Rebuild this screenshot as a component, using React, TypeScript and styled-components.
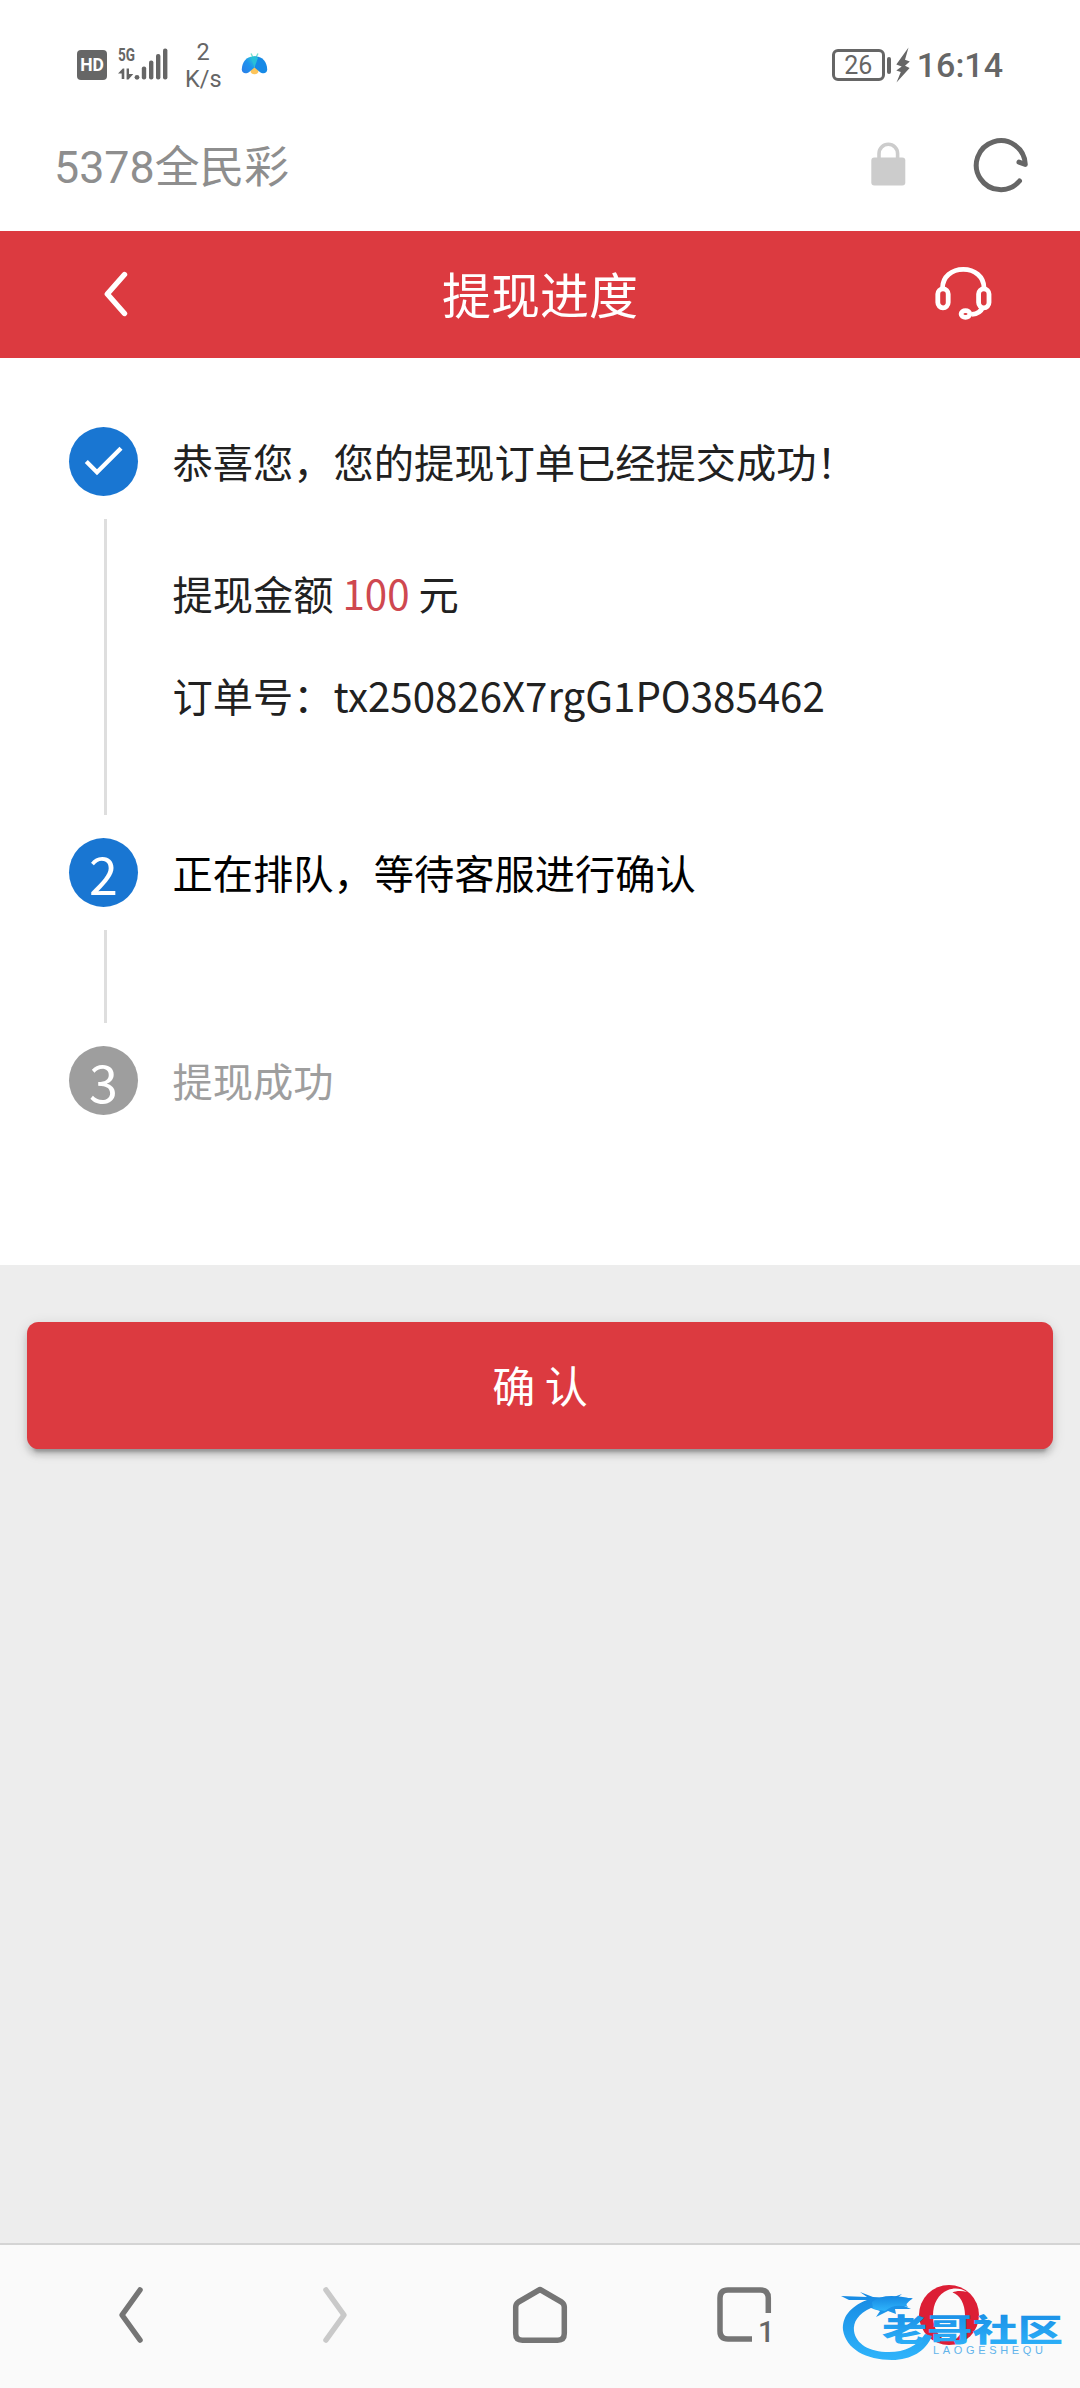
import React from "react";
import styled, { createGlobalStyle } from "styled-components";

const GlobalStyle = createGlobalStyle`
  * { box-sizing: border-box; }
  body { margin: 0; background: #ededed; }
`;

const cjk = `"Noto Sans CJK SC", "Noto Sans", sans-serif`;
const roboto = `Roboto, "Noto Sans CJK SC", sans-serif`;

const Page = styled.div`
  display: flex;
  flex-direction: column;
  width: 1080px;
  height: 2388px;
  overflow: hidden;
  background: #ededed;
  font-family: ${cjk};
`;

const StatusBar = styled.div`
  display: flex;
  align-items: center;
  justify-content: space-between;
  height: 130px;
  padding: 0 77px 0 77px;
  background: #fff;
  color: #666;
  font-family: ${roboto};
`;

const StatusGroup = styled.div`
  display: flex;
  align-items: center;
`;

const HdBadge = styled.span`
  width: 30px;
  height: 30px;
  margin-right: 11px;
  border-radius: 4px;
  background: #666;
  color: #fff;
  font: 700 17.5px/31px Roboto, sans-serif;
  text-align: center;
`;

const Speed = styled.div`
  width: 36px;
  margin: 0 20px 0 16px;
  padding-top: 2px;
  font-size: 23.5px;
  line-height: 27px;
  text-align: center;
`;

const Battery = styled.span`
  width: 53px;
  height: 32px;
  border: 3px solid #666;
  border-radius: 6px;
  font-size: 25px;
  line-height: 27px;
  text-align: center;
`;

const BatteryNub = styled.span`
  width: 4px;
  height: 17px;
  margin: 0 5px 0 2px;
  border-radius: 2px;
  background: #666;
`;

const Clock = styled.span`
  margin-left: 7px;
  font-size: 34px;
  font-weight: 500;
  line-height: 40px;
`;

const AddressBar = styled.div`
  display: flex;
  align-items: center;
  height: 101px;
  padding: 0 51px 31px 54px;
  background: #fff;
`;

const SiteName = styled.span`
  flex: 1;
  padding-top: 5px;
  color: #8e8e8e;
  font: 400 44.8px/60px ${roboto};
`;

const LockIcon = styled.svg`
  margin-right: 67px;
  margin-top: -3px;
`;

const Header = styled.header`
  display: grid;
  grid-template-columns: 140px 1fr 140px;
  align-items: center;
  height: 127px;
  background: #dc3a40;
`;

const HeaderAction = styled.button<{ $end?: boolean }>`
  display: flex;
  justify-content: ${(p) => (p.$end ? "flex-start" : "flex-end")};
  padding: ${(p) => (p.$end ? "0 0 4px" : "0 12px 2px 0")};
  margin-left: ${(p) => (p.$end ? "-5px" : "0")};
  border: 0;
  background: none;
`;

const Title = styled.h1`
  margin: 0;
  padding-bottom: 3px;
  color: #fff;
  font: 400 49px/70px ${cjk};
  text-align: center;
`;

const Panel = styled.main`
  display: flex;
  flex-direction: column;
  gap: 23px;
  height: 907px;
  padding: 69px 69px 0;
  background: #fff;
`;

const StepLabel = styled.div<{ $color: string }>`
  display: flex;
  align-items: center;
  gap: 34.5px;
  height: 69px;
  color: ${(p) => p.$color};
  font-size: 40.25px;
  line-height: 60px;
`;

const StepText = styled.span`
  padding-bottom: 2px;
`;

const StepDot = styled.span<{ $color: string }>`
  display: flex;
  align-items: center;
  justify-content: center;
  width: 69px;
  height: 69px;
  border-radius: 50%;
  background: ${(p) => p.$color};
  color: #fff;
  font-size: 52px;
  line-height: 69px;
`;

const StepBody = styled.div<{ $height: number }>`
  height: ${(p) => p.$height}px;
  margin-left: 35px;
  padding: 23px 0 0 65.5px;
  border-left: 3px solid #dedede;
  color: #212121;
  font-size: 40.25px;
`;

const Line = styled.p`
  margin: 0;
  line-height: 102px;
`;

const Amount = styled.span`
  color: #cf4850;
`;

const Confirm = styled.button`
  height: 127px;
  margin: 57px 27px 0;
  padding: 0 0 3px;
  border: 0;
  border-radius: 11.5px;
  background: #dc3a40;
  color: #fff;
  font: 400 43px/62px ${cjk};
  box-shadow: 0 9px 3px -6px rgba(0, 0, 0, 0.2), 0 6px 6px rgba(0, 0, 0, 0.14),
    0 3px 14px rgba(0, 0, 0, 0.12);
`;

const NavBar = styled.nav`
  position: relative;
  display: grid;
  grid-template-columns: repeat(5, 204.6px);
  justify-content: center;
  justify-items: center;
  align-items: center;
  height: 145px;
  margin-top: auto;
  padding-bottom: 3px;
  border-top: 2px solid #d4d4d4;
  background: #fafafa;
`;

const NavIcon = styled.svg<{ $muted?: boolean }>`
  overflow: visible;
  fill: none;
  stroke: ${(p) => (p.$muted ? "#c9c9c9" : "#757575")};
  stroke-width: 5.5;
  stroke-linecap: round;
  stroke-linejoin: round;
`;

const TabFrame = styled.path`
  stroke-linecap: butt;
`;

const Watermark = styled.svg`
  position: absolute;
  left: 829px;
  top: 25px;
`;

const SignalIcon = () => (
  <svg width="51" height="34" viewBox="0 0 51 34" fill="#666" overflow="visible">
    <text x="0" y="13" fontFamily="Roboto, sans-serif" fontWeight="700" fontSize="18" textLength="17" lengthAdjust="spacingAndGlyphs">5G</text>
    <path d="M0 25.5 L4.8 20.5 H6.3 V31 H3.7 V25.5Z M8.6 20.5 H11 V26 H15.3 L10.5 31.5 H8.6Z" />
    <circle cx="19" cy="29.3" r="2.4" />
    <rect x="23.8" y="18.5" width="4.4" height="13" rx="2" />
    <rect x="31" y="12.5" width="4.4" height="19" rx="2" />
    <rect x="38" y="6" width="4.4" height="25.5" rx="2" />
    <rect x="45" y="0.5" width="4.4" height="31" rx="2" />
  </svg>
);

const ButterflyIcon = () => (
  <svg width="27" height="24" viewBox="0 0 27 24">
    <defs>
      <linearGradient id="wing" x1="0" y1="1" x2="1" y2="0">
        <stop offset="0" stopColor="#2b7de8" />
        <stop offset="0.55" stopColor="#1f93ee" />
        <stop offset="1" stopColor="#2fd3cf" />
      </linearGradient>
    </defs>
    <path d="M10 0.5 L12.3 5 M17 0.5 L14.7 5" stroke="#79dfcf" strokeWidth="1.4" fill="none" />
    <ellipse cx="13.5" cy="17.5" rx="4" ry="3.8" fill="#fdc55b" />
    <path d="M13 3.5 C6 3 1 8.5 0.8 16.5 C1 20.5 5 21.5 8.5 18.7 L13.5 14.5Z" fill="url(#wing)" />
    <path d="M14 3.5 C21 3 26 8.5 26.2 16.5 C26 20.5 22 21.5 18.5 18.7 L13.5 14.5Z" fill="#1689e6" />
    <path d="M13.5 3 L17 4.8 L13.5 14.5 L10 4.8Z" fill="#28bfd8" />
  </svg>
);

export default function App() {
  return (
    <Page>
      <GlobalStyle />
      <StatusBar>
        <StatusGroup>
          <HdBadge>HD</HdBadge>
          <SignalIcon />
          <Speed>
            <div>2</div>
            <div>K/s</div>
          </Speed>
          <ButterflyIcon />
        </StatusGroup>
        <StatusGroup>
          <Battery>26</Battery>
          <BatteryNub />
          <svg width="14" height="36" viewBox="0 0 14 36" fill="#666">
            <path d="M12.5 0.5 L0.3 17.5 L5.7 19.5 L0.3 23.5 L4.8 25 L0.5 35.5 L13.6 21 L9 18.8 L13.8 14.5 L9 12.7Z" />
          </svg>
          <Clock>16:14</Clock>
        </StatusGroup>
      </StatusBar>

      <AddressBar>
        <SiteName>5378全民彩</SiteName>
        <LockIcon width="35" height="44" viewBox="0 0 35 44">
          <path d="M8 18 V11.5 a9.3 9.3 0 0 1 18.6 0 V18" fill="none" stroke="#ccc" strokeWidth="3.6" />
          <rect x="0.3" y="15.5" width="34" height="28" rx="3" fill="#ccc" />
        </LockIcon>
        <svg width="56" height="56" viewBox="0 0 56 56" fill="none" stroke="#666" strokeWidth="5" strokeLinecap="round" strokeLinejoin="round">
          <path d="M46.5 44 A24.5 24.5 0 1 1 52.3 27.5 L46 25.2" />
        </svg>
      </AddressBar>

      <Header>
        <HeaderAction aria-label="back">
          <svg width="24" height="46" viewBox="0 0 24 46" fill="none" stroke="#fff" strokeWidth="5.4" strokeLinecap="round" strokeLinejoin="round">
            <path d="M20.5 3.5 L3.3 23 L20.5 42.5" />
          </svg>
        </HeaderAction>
        <Title>提现进度</Title>
        <HeaderAction $end aria-label="support">
          <svg width="57" height="54" viewBox="0 0 57 54" fill="none" stroke="#fff" strokeWidth="4.8">
            <path d="M7.5 23 V22 C7.5 10.5 17 3.3 28.3 3.3 C39.6 3.3 49 10.5 49 22 V23" />
            <rect x="2.8" y="22.8" width="10.4" height="19" rx="5.2" />
            <rect x="43.6" y="22.8" width="10.4" height="19" rx="5.2" />
            <path d="M48 41 C46 45.5 42.5 48 37 48.3" />
            <ellipse cx="30.5" cy="48" rx="4.4" ry="3.4" />
          </svg>
        </HeaderAction>
      </Header>

      <Panel>
        <StepLabel $color="#212121">
          <StepDot $color="#1976d2">
            <svg width="40" height="32" viewBox="0 0 40 32" fill="none" stroke="#fff" strokeWidth="4.3">
              <path d="M2.3 15.5 L13 26.2 L37 2.3" />
            </svg>
          </StepDot>
          <StepText>恭喜您，您的提现订单已经提交成功！</StepText>
        </StepLabel>
        <StepBody $height={296}>
          <Line>
            提现金额 <Amount>100</Amount> 元
          </Line>
          <Line>订单号：tx250826X7rgG1PO385462</Line>
        </StepBody>
        <StepLabel $color="#000">
          <StepDot $color="#1976d2">2</StepDot>
          <StepText>正在排队，等待客服进行确认</StepText>
        </StepLabel>
        <StepBody $height={93} />
        <StepLabel $color="#9e9e9e">
          <StepDot $color="#9e9e9e">3</StepDot>
          <StepText>提现成功</StepText>
        </StepLabel>
      </Panel>

      <Confirm>确 认</Confirm>

      <NavBar>
        <NavIcon width="26" height="58" viewBox="0 0 26 58">
          <path d="M22 4 L4 29 L22 54" />
        </NavIcon>
        <NavIcon $muted width="26" height="58" viewBox="0 0 26 58">
          <path d="M4 4 L22 29 L4 54" />
        </NavIcon>
        <NavIcon width="56" height="58" viewBox="0 0 56 58">
          <path d="M28 3.5 L6.5 16 Q3.7 18 3.7 21 V47.5 Q3.7 54.2 10.4 54.2 H45.6 Q52.3 54.2 52.3 47.5 V21 Q52.3 18 49.5 16Z" />
        </NavIcon>
        <NavIcon width="60" height="72" viewBox="0 -6 60 72">
          <TabFrame d="M37 54 H13 Q5 54 5 46 V13 Q5 5 13 5 H45.5 Q53.3 5 53.3 13 V28" />
          <text x="43" y="57" fill="#666" stroke="none" fontFamily="Roboto, sans-serif" fontWeight="500" fontSize="29">1</text>
        </NavIcon>
        <NavIcon width="62" height="62" viewBox="0 0 62 62">
          <circle cx="31" cy="31" r="30" fill="#dc1e35" stroke="none" />
          <path
            d="M49 8 C43 4 36 3.5 30 6 C20 10 15 20 15 31 C15 45 22 57 33 57 C41 56 47 45 47 31 C47 20 42 11 34.5 8.5 C38 6.5 44 6.5 49 8Z"
            fill="#fafafa"
            stroke="none"
          />
        </NavIcon>
        <Watermark width="240" height="100" viewBox="0 0 240 100">
          <defs>
            <linearGradient id="mark" x1="0" y1="0" x2="0" y2="1">
              <stop offset="0" stopColor="#1688e2" />
              <stop offset="1" stopColor="#2fb4fb" />
            </linearGradient>
          </defs>
          <g fill="url(#mark)">
            <path d="M38 30 C20 37 13 48 14 60 C17 79 37 90 63 90 C82 90 97 81 103 66 L96 64 C88 76 76 82 60 82 C40 82 27 74 25 61 C24 52 29 44 42 38 L51 41 L47 47 L59 41 L67 44 L66 39 L82 39 L73 35 L84 28 L68 28 L73 24 L62 28 L44 27 L31 22 L38 27 L12 26 L20 30Z" />
            <path d="M43 32 Q55 22 83 29 Q75 34 79 37 Q65 33 56 41 L44 39Z" />
            <text x="53" y="71" fontFamily='"Noto Sans CJK SC", sans-serif' fontWeight="900" fontSize="31" textLength="181" lengthAdjust="spacingAndGlyphs">老哥社区</text>
          </g>
          <text x="104" y="83.5" fill="#62b4ea" fontFamily='"Liberation Sans", sans-serif' fontSize="11" textLength="110" lengthAdjust="spacing">LAOGESHEQU</text>
        </Watermark>
      </NavBar>
    </Page>
  );
}
